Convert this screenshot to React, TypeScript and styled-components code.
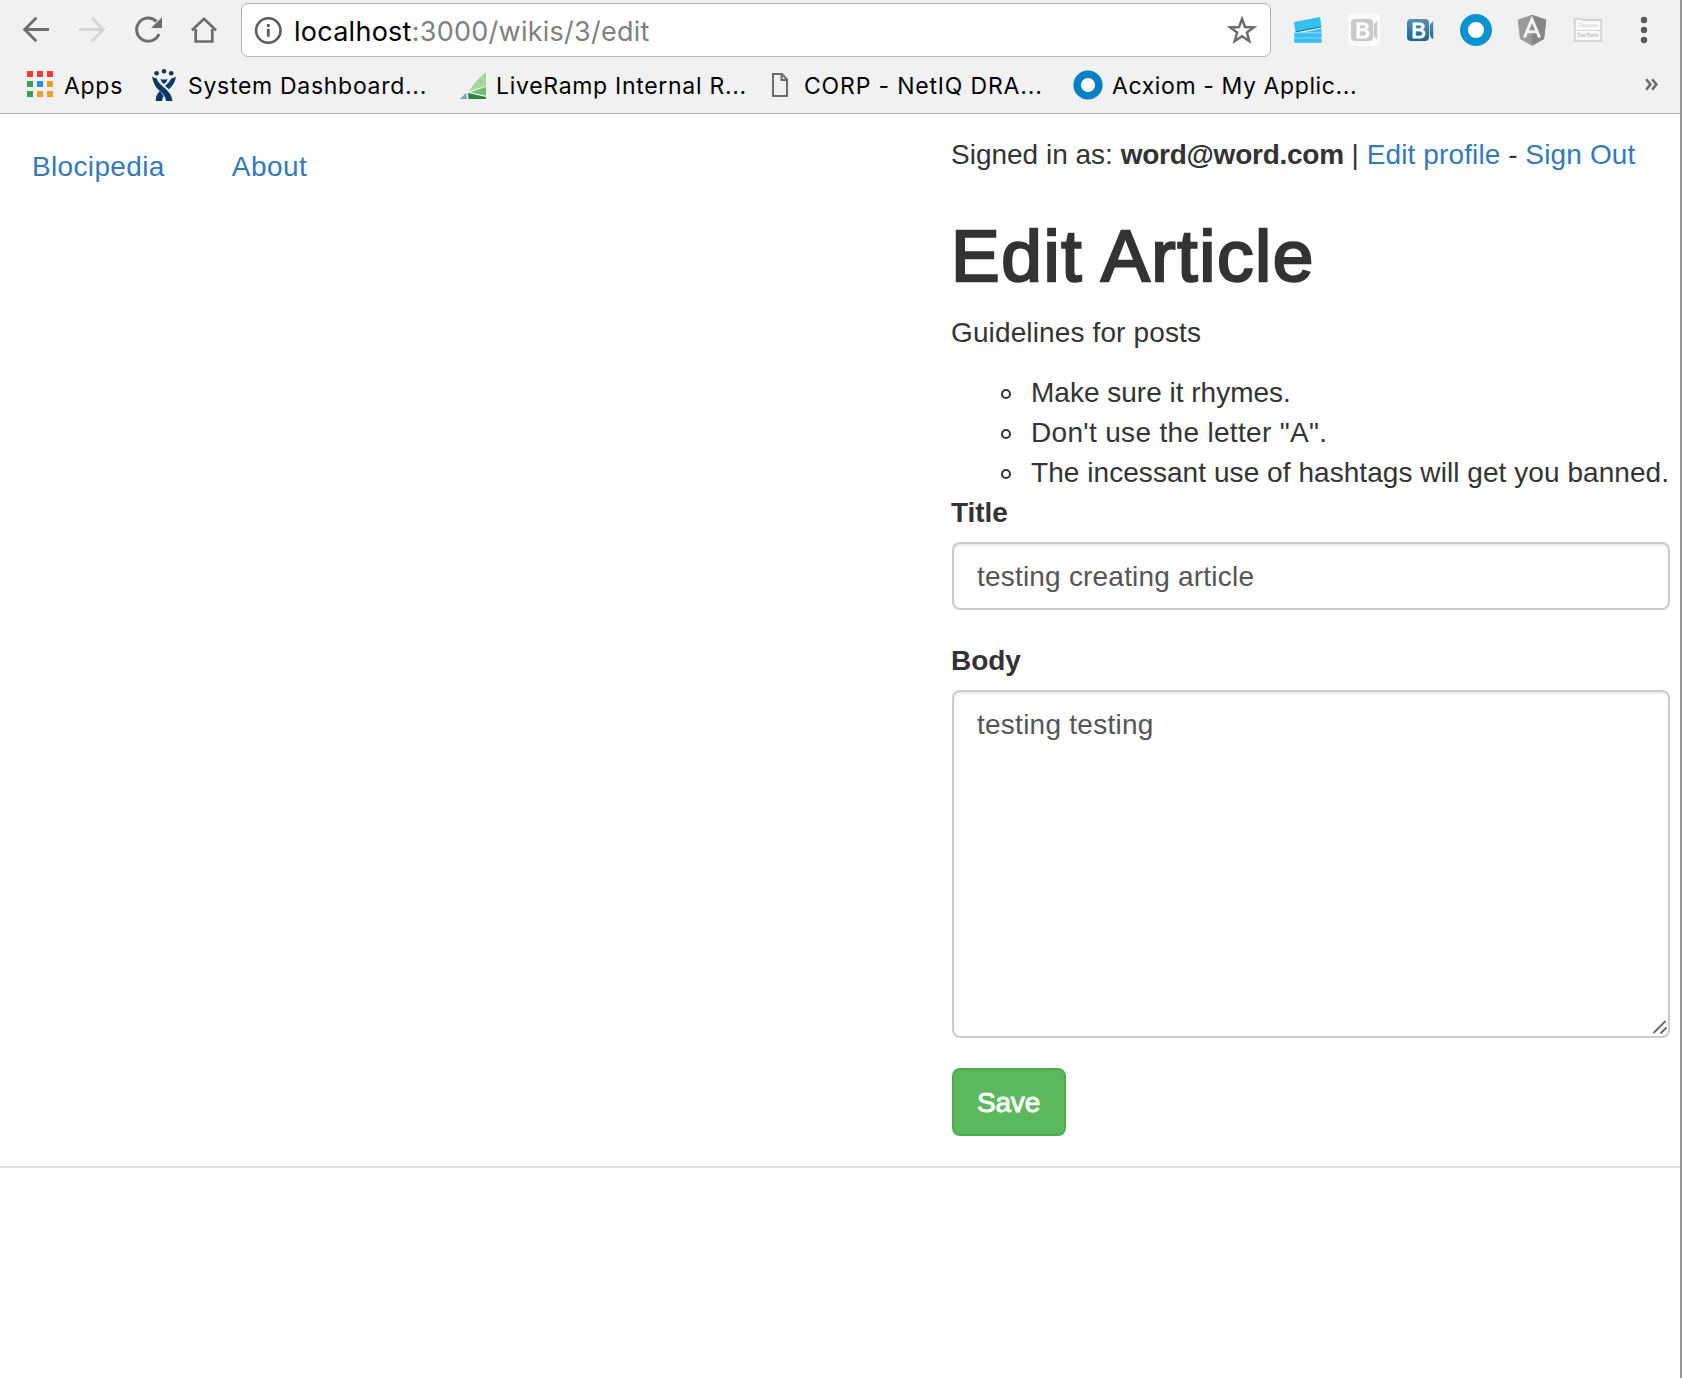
import React from "react";
import styled, { createGlobalStyle } from "styled-components";

const GlobalStyle = createGlobalStyle`
  *, *::before, *::after { box-sizing: border-box; }
  body {
    margin: 0;
    background: #fff;
    color: #333;
    font-family: "Liberation Sans", Arial, sans-serif;
    font-size: 28px;
    line-height: 40px;
    letter-spacing: 0.13px;
  }
`;

const Window = styled.div`
  width: 1682px;
  height: 1378px;
  overflow: hidden;
  border-right: 2px solid #979797;
  background: #fff;
`;

/* ---------- browser chrome ---------- */

const Chrome = styled.header`
  height: 114px;
  background: #f1f1f1;
  border-bottom: 1px solid #b2b2b2;
  font-family: Inter, Roboto, sans-serif;
`;

const Toolbar = styled.div`
  display: flex;
  align-items: center;
  height: 60px;
  padding-left: 22px;
`;

const Icon = styled.svg<{ $ml?: number }>`
  display: block;
  flex: none;
  margin-left: ${(p) => p.$ml ?? 0}px;
`;

const Omnibox = styled.div`
  display: flex;
  align-items: center;
  flex: none;
  width: 1030px;
  height: 54px;
  margin-left: 23px;
  padding: 0 13px 0 12px;
  background: #fff;
  border: 1px solid #b3b3b3;
  border-radius: 7px;
`;

const Url = styled.span`
  flex: 1;
  margin-left: 12px;
  padding-top: 3px;
  color: #808080;
  font-size: 27px;
  letter-spacing: 0.26px;
  white-space: nowrap;
`;

const Host = styled.span`
  color: #000;
`;

const Bookmarks = styled.nav`
  display: flex;
  align-items: center;
  height: 50px;
  padding-left: 26px;
`;

const Bookmark = styled.a<{ $width: number; $gap: number }>`
  display: flex;
  align-items: center;
  flex: none;
  gap: ${(p) => p.$gap}px;
  width: ${(p) => p.$width}px;
  color: #000;
`;

const BookmarkLabel = styled.span<{ $ls?: number }>`
  padding-top: 1px;
  font-size: 23px;
  line-height: 32px;
  letter-spacing: ${(p) => p.$ls ?? 0.7}px;
  white-space: nowrap;
`;

const ClapIcon = () => (
  <Icon $ml={21} width="32" height="32" viewBox="0 0 32 32">
    <path d="M2 8 L28 3 L29.3 12 L3.4 18 Z" fill="#36c1f4" />
    <path d="M2.3 18.2 H12 L29.5 14.6 V18.4 H2.3 Z" fill="#36c1f4" />
    <path d="M3.4 17.2 L29.2 12 V13.4 L5 18.2 Z" fill="#1782a8" />
    <rect x="2.3" y="18.4" width="27.2" height="10.4" fill="#7fd6f6" />
    <rect x="2.3" y="19.4" width="27.2" height="4" fill="#36c1f4" />
    <rect x="2.3" y="24.6" width="27.2" height="4.2" fill="#36c1f4" />
  </Icon>
);

const CamText = styled.text`
  font-family: "Liberation Sans", Arial, sans-serif;
  font-size: 22px;
  font-weight: 400;
  letter-spacing: 0;
`;

const CameraIcon = ({ active }: { active?: boolean }) => (
  <Icon $ml={24} width="32" height="32" viewBox="0 0 32 32">
    <defs>
      <linearGradient id="cam" x1="0" y1="0" x2="0" y2="1">
        <stop offset="0" stopColor="#5592b2" />
        <stop offset="1" stopColor="#17658f" />
      </linearGradient>
    </defs>
    {!active && <rect width="32" height="32" fill="#fafafa" />}
    <rect x="3" y="5" width="22" height="22" rx="4" fill={active ? "url(#cam)" : "#c9c9c9"} />
    <path d="M29.2 7 Q25.8 9.5 25.8 12.5 V20 Q25.8 23 29.2 25.5 Z" fill={active ? "url(#cam)" : "#c9c9c9"} />
    <CamText x="7.2" y="23.6" fill="#fff" stroke="#fff" strokeWidth="1">B</CamText>
  </Icon>
);

const DevText = styled.text`
  font-family: "Liberation Sans", Arial, sans-serif;
  font-size: 5px;
  letter-spacing: 0;
`;

const ExtensionIcons = () => (
  <>
    <ClapIcon />
    <CameraIcon />
    <CameraIcon active />
    <Icon $ml={24} width="32" height="32" viewBox="0 0 32 32">
      <circle cx="16" cy="16" r="12" fill="#fff" />
      <circle cx="16" cy="16" r="12" fill="none" stroke="#0a94cf" strokeWidth="8" />
    </Icon>
    <Icon $ml={24} width="32" height="32" viewBox="0 0 32 32">
      <path d="M16 0.7 L30.3 5.8 L28 25 L16 31.7 L4 25 L1.7 5.8 Z" fill="#9b9b9b" />
      <path d="M16 0.7 L30.3 5.8 L28 25 L16 31.7 Z" fill="#868686" />
      <path d="M8.4 23.5 L16 5.5 L23.6 23.5 M11.8 17.8 H20.2" fill="none" stroke="#f4f4f4" strokeWidth="3" />
    </Icon>
    <Icon $ml={24} width="32" height="32" viewBox="0 0 32 32">
      <path d="M2.8 26.8 V4.8 H9 L11 6 H29.2 V26.8 Z" fill="#fafafa" stroke="#d3d3d3" strokeWidth="1.8" />
      <path d="M3 16.5 H29" stroke="#d8d8d8" strokeWidth="1" />
      <DevText x="6.6" y="13.4" fill="#cfcfcf">Discover</DevText>
      <DevText x="5.6" y="23" fill="#a8a8a8">DevTools</DevText>
    </Icon>
    <Icon $ml={34} width="12" height="32" viewBox="0 0 12 32">
      <g fill="#5a5a5a">
        <circle cx="6" cy="6" r="3.2" />
        <circle cx="6" cy="16" r="3.2" />
        <circle cx="6" cy="26" r="3.2" />
      </g>
    </Icon>
  </>
);

const BrowserToolbar = () => (
  <Toolbar>
    <Icon width="28" height="28" viewBox="0 0 28 28" fill="none" stroke="#6c6c6c" strokeWidth="2.8">
      <path d="M27 13.5 H3 M14.3 1.8 L2.7 13.5 L14.3 25.2" />
    </Icon>
    <Icon $ml={28} width="28" height="28" viewBox="0 0 28 28" fill="none" stroke="#d6d6d6" strokeWidth="2.8">
      <path d="M1 13.5 H25 M13.7 1.8 L25.3 13.5 L13.7 25.2" />
    </Icon>
    <Icon $ml={28} width="30" height="28" viewBox="0 0 30 28">
      <path d="M25 18 A11.6 11.6 0 1 1 22.5 5.5" fill="none" stroke="#6c6c6c" strokeWidth="3" />
      <path d="M28 1.2 V12 H17.2 Z" fill="#6c6c6c" />
    </Icon>
    <Icon $ml={26} width="28" height="28" viewBox="0 0 28 28">
      <path d="M1.9 14.2 L14 2.8 L26.1 14.2 M5.7 13 V25.5 H22.3 V13" fill="none" stroke="#6c6c6c" strokeWidth="2.7" />
    </Icon>
    <Omnibox>
      <Icon width="28" height="28" viewBox="0 0 28 28">
        <circle cx="14.3" cy="14.5" r="12.2" fill="none" stroke="#5c5c5c" strokeWidth="2.6" />
        <rect x="12.9" y="8" width="2.8" height="3" fill="#5c5c5c" />
        <rect x="12.9" y="12.8" width="2.8" height="8" fill="#5c5c5c" />
      </Icon>
      <Url><Host>localhost</Host>:3000/wikis/3/edit</Url>
      <Icon width="30" height="30" viewBox="0 0 30 30">
        <path
          d="M15 4 L18 12 L26.7 12.4 L19.9 17.6 L22.3 26 L15 21.2 L7.7 26 L10.1 17.6 L3.3 12.4 L12 12 Z"
          fill="none"
          stroke="#6c6c6c"
          strokeWidth="2.5"
        />
      </Icon>
    </Omnibox>
    <ExtensionIcons />
  </Toolbar>
);

const APP_COLORS = ["#f33c37", "#f33c37", "#f33c37", "#3c9e5b", "#2a8cf5", "#f0a026", "#3c9e5b", "#f0a026", "#f0a026"];

const BookmarksBar = () => (
  <Bookmarks>
    <Bookmark $width={125} $gap={10}>
      <Icon width="28" height="28" viewBox="0 0 28 28">
        {APP_COLORS.map((c, i) => (
          <rect key={i} x={1 + (i % 3) * 10} y={(Math.floor(i / 3)) * 10} width="6" height="6" fill={c} />
        ))}
      </Icon>
      <BookmarkLabel>Apps</BookmarkLabel>
    </Bookmark>
    <Bookmark $width={309} $gap={11}>
      <Icon width="26" height="32" viewBox="0 0 26 32" fill="#08376b">
        <circle cx="5.6" cy="4.2" r="2.3" />
        <circle cx="13" cy="2.2" r="2.2" />
        <circle cx="20.2" cy="4.2" r="2.3" />
        <path d="M9.5 10 Q13 11.2 16.5 10 Q15.5 14 13 14.8 Q10.5 14 9.5 10 Z" />
        <path d="M1 7.5 Q3 9.5 5.5 9.3 Q7.5 14.5 13 18.5 Q20.5 24 21.5 32 H15 Q14.5 27 10.5 23.5 Q2.5 17.5 1 7.5 Z" />
        <path d="M25 7.5 Q23 9.5 20.5 9.3 Q18.5 13.5 14 17 L18 20.2 Q24 15 25 7.5 Z" />
        <path d="M9 22 Q4.5 26 4.7 32 H11 Q11.3 29 12.7 27 Z" />
      </Icon>
      <BookmarkLabel>System Dashboard...</BookmarkLabel>
    </Bookmark>
    <Bookmark $width={311} $gap={8}>
      <Icon width="28" height="28" viewBox="0 0 28 28">
        <path d="M26 1 V15 L9 20 Q16 9 26 1 Z" fill="#a5d79a" />
        <path d="M26 15.8 V24.8 L10.5 21.2 Z" fill="#6cc163" />
        <path d="M8 22 L26 26 V28 H8.5 Z" fill="#2f8140" />
        <path d="M0 28 L6 22 L7 28 Z" fill="#7d9db5" />
      </Icon>
      <BookmarkLabel>LiveRamp Internal R...</BookmarkLabel>
    </Bookmark>
    <Bookmark $width={302} $gap={15}>
      <Icon width="18" height="26" viewBox="0 0 18 26" fill="none" stroke="#6c6c6c" strokeWidth="2">
        <path d="M2 2 H11 L16 7.5 V24 H2 Z M10.5 2 V8 H16" />
      </Icon>
      <BookmarkLabel $ls={0.82}>CORP - NetIQ DRA...</BookmarkLabel>
    </Bookmark>
    <Bookmark $width={572} $gap={9}>
      <Icon width="30" height="30" viewBox="0 0 30 30">
        <circle cx="15" cy="15" r="10.8" fill="#fff" stroke="#0680c4" strokeWidth="7.6" />
      </Icon>
      <BookmarkLabel $ls={0.6}>Acxiom - My Applic...</BookmarkLabel>
    </Bookmark>
    <Icon width="14" height="14" viewBox="0 0 14 14" fill="none" stroke="#6c6c6c" strokeWidth="2.6">
      <path d="M1.2 1.2 L5.4 6.5 L1.2 11.8 M7.2 1.2 L11.4 6.5 L7.2 11.8" />
    </Icon>
  </Bookmarks>
);

/* ---------- page ---------- */

const Page = styled.main`
  display: flex;
  justify-content: space-between;
  height: 1054px;
  padding: 21px 10px 0 32px;
  border-bottom: 2px solid #ddd;
`;

const SiteNav = styled.nav`
  display: flex;
  gap: 67px;
  padding-top: 12px;
`;

const Link = styled.a<{ $ls?: number }>`
  color: #337ab7;
  letter-spacing: ${(p) => p.$ls ?? 0}px;
  text-decoration: none;
`;

const Content = styled.section`
  display: flex;
  flex-direction: column;
  width: 719px;
  white-space: nowrap;
`;

const Session = styled.div`
  height: 40px;
  letter-spacing: 0;
`;

const Email = styled.strong`
  letter-spacing: -0.25px;
`;

const Heading = styled.h1`
  height: 78px;
  margin: 40px 0 20px;
  font-size: 73px;
  line-height: 81px;
  font-weight: 400;
  letter-spacing: 1.6px;
  -webkit-text-stroke: 2.4px #333;
`;

const Intro = styled.p`
  margin: 0 0 20px;
`;

const Guidelines = styled.ul`
  margin: 0;
  padding: 0 0 0 50px;
  list-style: none;
`;

const Guideline = styled.li<{ $ls?: number }>`
  display: flex;
  align-items: center;
  gap: 20px;
  letter-spacing: ${(p) => p.$ls ?? 0.06}px;

  &::before {
    content: "";
    flex: none;
    width: 10px;
    height: 10px;
    margin-top: 2px;
    border: 2px solid #333;
    border-radius: 50%;
  }
`;

const Label = styled.label`
  margin-bottom: 9px;
  font-weight: 700;
  letter-spacing: -0.05px;
`;

const fieldLook = `
  display: block;
  width: 718px;
  border: 2px solid #ccc;
  border-radius: 8px;
  outline: none;
  background: #fff;
  box-shadow: inset 0 2px 2px rgba(0, 0, 0, 0.075);
  color: #555;
  font: inherit;
`;

const TextInput = styled.input`
  ${fieldLook}
  height: 68px;
  margin: 0 0 31px 1px;
  padding: 14px 23px 12px;
  letter-spacing: 0.2px;
`;

const BodyFrame = styled.div`
  position: relative;
`;

const TextArea = styled.textarea`
  ${fieldLook}
  height: 348px;
  margin: 0 0 30px 1px;
  padding: 13px 23px 11px;
  letter-spacing: 0.25px;
  resize: none;
`;

const Grip = styled.svg`
  position: absolute;
  right: 2px;
  bottom: 33px;
`;

const SaveButton = styled.button`
  width: 114px;
  height: 68px;
  margin-left: 1px;
  padding: 2px 1px 0 0;
  border: 2px solid #4cae4c;
  border-radius: 8px;
  background: #5cb85c;
  color: #fff;
  font: inherit;
  letter-spacing: -0.15px;
  -webkit-text-stroke: 0.9px #fff;
`;

export default function App() {
  return (
    <Window>
      <GlobalStyle />
      <Chrome>
        <BrowserToolbar />
        <BookmarksBar />
      </Chrome>
      <Page>
        <SiteNav>
          <Link $ls={0.35}>Blocipedia</Link>
          <Link $ls={0.5}>About</Link>
        </SiteNav>
        <Content>
          <Session>
            Signed in as: <Email>word@word.com</Email> | <Link $ls={0.12}>Edit profile</Link> - <Link $ls={0.15}>Sign Out</Link>
          </Session>
          <Heading>Edit Article</Heading>
          <Intro>Guidelines for posts</Intro>
          <Guidelines>
            <Guideline $ls={0}>Make sure it rhymes.</Guideline>
            <Guideline $ls={0.32}>Don't use the letter "A".</Guideline>
            <Guideline>The incessant use of hashtags will get you banned.</Guideline>
          </Guidelines>
          <Label htmlFor="title">Title</Label>
          <TextInput id="title" defaultValue="testing creating article" />
          <Label htmlFor="body">Body</Label>
          <BodyFrame>
            <TextArea id="body" defaultValue="testing testing" />
            <Grip width="16" height="16" viewBox="0 0 16 16" fill="none" stroke="#666" strokeWidth="1.8">
              <path d="M1.5 14 L13.5 2 M8.5 14.5 L14.5 8.5" />
            </Grip>
          </BodyFrame>
          <SaveButton type="button">Save</SaveButton>
        </Content>
      </Page>
    </Window>
  );
}
